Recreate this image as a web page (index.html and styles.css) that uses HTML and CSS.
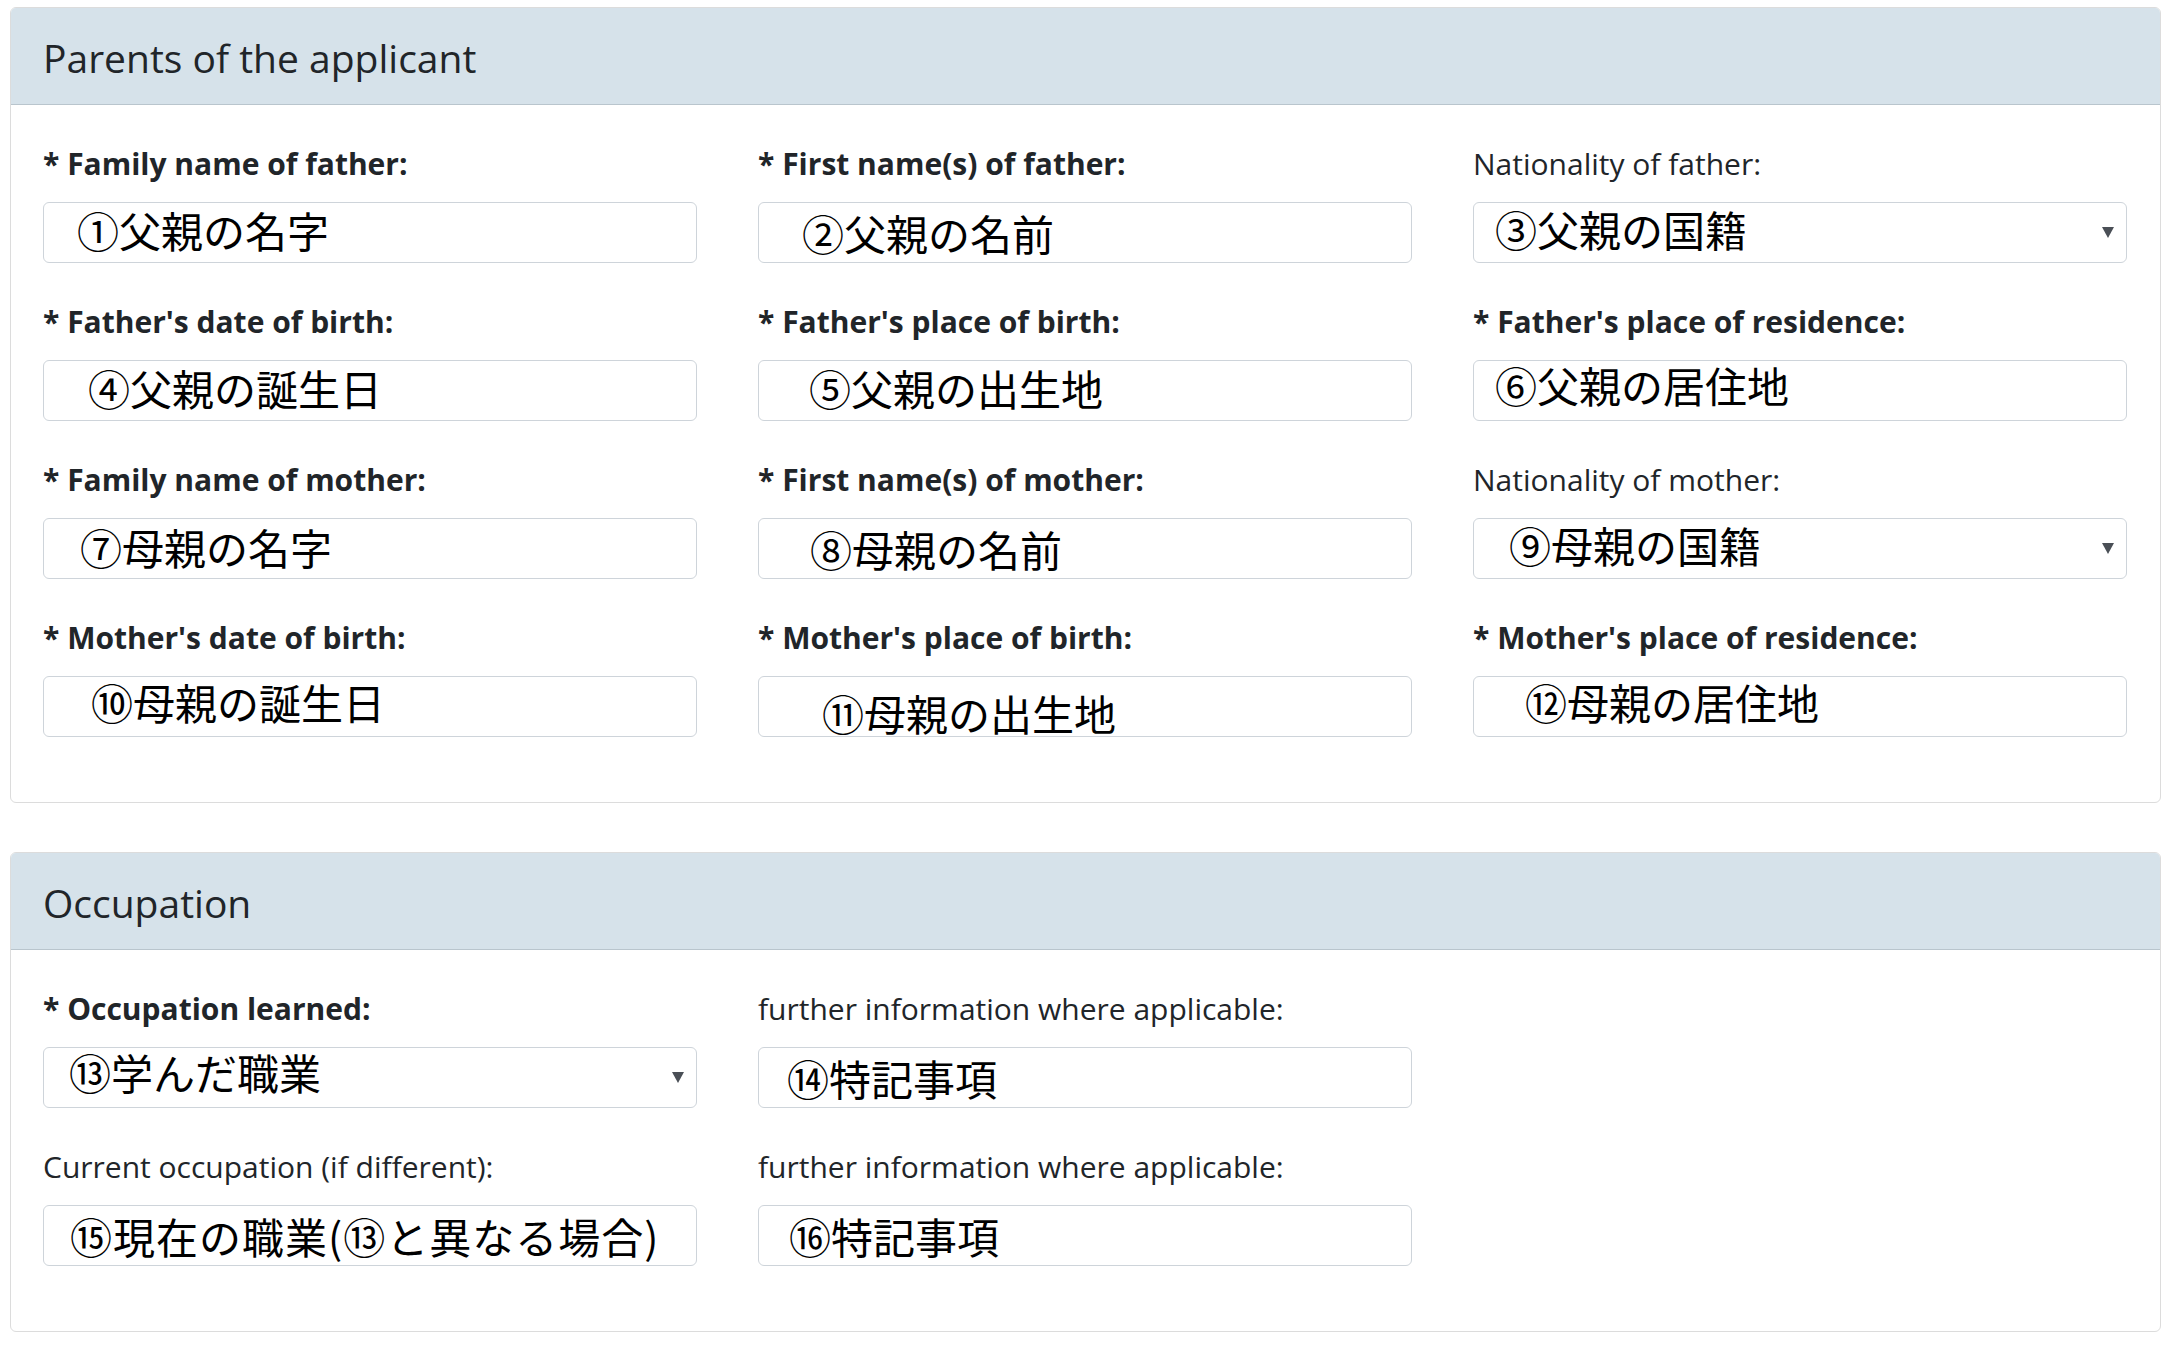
FILE: index.html
```html
<!DOCTYPE html>
<html lang="en">
<head>
<meta charset="utf-8">
<title>Application form</title>
<link rel="stylesheet" href="styles.css">
</head>
<body>
<div class="page">
  <section class="card">
    <header class="card-header"><h4 class="card-title">Parents of the applicant</h4></header>
    <div class="card-body">
      <div class="field">
        <label class="label req">* Family name of father:</label>
        <div class="control"><span class="val a1">①父親の名字</span></div>
      </div>
      <div class="field">
        <label class="label req">* First name(s) of father:</label>
        <div class="control"><span class="val a2">②父親の名前</span></div>
      </div>
      <div class="field">
        <label class="label">Nationality of father:</label>
        <div class="control select"><span class="val a3">③父親の国籍</span><span class="caret"></span></div>
      </div>

      <div class="field">
        <label class="label req">* Father's date of birth:</label>
        <div class="control"><span class="val a4">④父親の誕生日</span></div>
      </div>
      <div class="field">
        <label class="label req">* Father's place of birth:</label>
        <div class="control"><span class="val a5">⑤父親の出生地</span></div>
      </div>
      <div class="field">
        <label class="label req">* Father's place of residence:</label>
        <div class="control"><span class="val a6">⑥父親の居住地</span></div>
      </div>

      <div class="field">
        <label class="label req">* Family name of mother:</label>
        <div class="control"><span class="val a7">⑦母親の名字</span></div>
      </div>
      <div class="field">
        <label class="label req">* First name(s) of mother:</label>
        <div class="control"><span class="val a8">⑧母親の名前</span></div>
      </div>
      <div class="field">
        <label class="label">Nationality of mother:</label>
        <div class="control select"><span class="val a9">⑨母親の国籍</span><span class="caret"></span></div>
      </div>

      <div class="field">
        <label class="label req">* Mother's date of birth:</label>
        <div class="control"><span class="val a10">⑩母親の誕生日</span></div>
      </div>
      <div class="field">
        <label class="label req">* Mother's place of birth:</label>
        <div class="control"><span class="val a11">⑪母親の出生地</span></div>
      </div>
      <div class="field">
        <label class="label req">* Mother's place of residence:</label>
        <div class="control"><span class="val a12">⑫母親の居住地</span></div>
      </div>
    </div>
  </section>

  <section class="card">
    <header class="card-header"><h4 class="card-title">Occupation</h4></header>
    <div class="card-body">
      <div class="field">
        <label class="label req">* Occupation learned:</label>
        <div class="control select"><span class="val a13">⑬学んだ職業</span><span class="caret"></span></div>
      </div>
      <div class="field">
        <label class="label">further information where applicable:</label>
        <div class="control"><span class="val a14">⑭特記事項</span></div>
      </div>
      <div class="field empty"></div>

      <div class="field">
        <label class="label">Current occupation (if different):</label>
        <div class="control"><span class="val a15">⑮現在の職業(⑬と異なる場合)</span></div>
      </div>
      <div class="field">
        <label class="label">further information where applicable:</label>
        <div class="control"><span class="val a16">⑯特記事項</span></div>
      </div>
      <div class="field empty"></div>
    </div>
  </section>
</div>
</body>
</html>
```

FILE: styles.css
```css
* { box-sizing: border-box; }

html, body {
  margin: 0;
  padding: 0;
  background: #ffffff;
}

body {
  font-family: "Open Sans", "Noto Sans", "Noto Sans CJK JP", sans-serif;
  color: #212529;
}

.page {
  padding: 7px 11px 20px 10px;
  display: flex;
  flex-direction: column;
  gap: 49px;
}

.card {
  border: 1px solid #dcdcdc;
  border-radius: 6px;
  background: #ffffff;
}

.card-header {
  height: 97px;
  background: #d6e2ea;
  border-bottom: 1px solid #b9c5cd;
  border-radius: 5px 5px 0 0;
  padding: 0 32px;
  display: flex;
  align-items: center;
}

.card-title {
  margin: 4px 0 0 0;
  font-size: 39px;
  font-weight: 400;
  line-height: 1.2;
  color: #212529;
}

.card-body {
  padding: 41px 33px 65px 32px;
  display: grid;
  grid-template-columns: repeat(3, 1fr);
  column-gap: 61px;
  row-gap: 41px;
}

.field {
  display: flex;
  flex-direction: column;
  gap: 20px;
}

.label {
  font-size: 30px;
  line-height: 34px;
  margin-top: 1px;
  margin-bottom: 1px;
  font-weight: 400;
  color: #212529;
  white-space: nowrap;
}

.label.req {
  font-weight: 700;
}

.control {
  height: 61px;
  border: 1px solid #ced4da;
  border-radius: 6px;
  background: #ffffff;
  display: flex;
  align-items: center;
}

.val {
  font-family: "Noto Sans CJK JP", sans-serif;
  font-size: 42px;
  line-height: 1.1;
  color: #000000;
  white-space: nowrap;
}

.caret {
  margin-left: auto;
  margin-right: 12px;
  width: 0;
  height: 0;
  border-left: 6px solid transparent;
  border-right: 6px solid transparent;
  border-top: 11px solid #4a4f56;
}

/* annotation offsets */
.a1  { padding-left: 33px; margin-top: -4px; }
.a2  { padding-left: 43px; margin-top: 2px; }
.a3  { padding-left: 21px; margin-top: -6px; }
.a4  { padding-left: 44px; margin-top: -4px; }
.a5  { padding-left: 50px; margin-top: -4px; }
.a6  { padding-left: 21px; margin-top: -10px; }
.a7  { padding-left: 36px; margin-top: -2px; }
.a8  { padding-left: 51px; margin-top: 2px; }
.a9  { padding-left: 35px; margin-top: -6px; }
.a10 { padding-left: 47px; margin-top: -8px; }
.a11 { padding-left: 63px; margin-top: 14px; }
.a12 { padding-left: 51px; margin-top: -8px; }
.a13 { padding-left: 25px; margin-top: -10px; }
.a14 { padding-left: 28px; margin-top: 2px; }
.a15 { padding-left: 26px; margin-top: 2px; letter-spacing: 1px; }
.a16 { padding-left: 30px; margin-top: 2px; }
```
